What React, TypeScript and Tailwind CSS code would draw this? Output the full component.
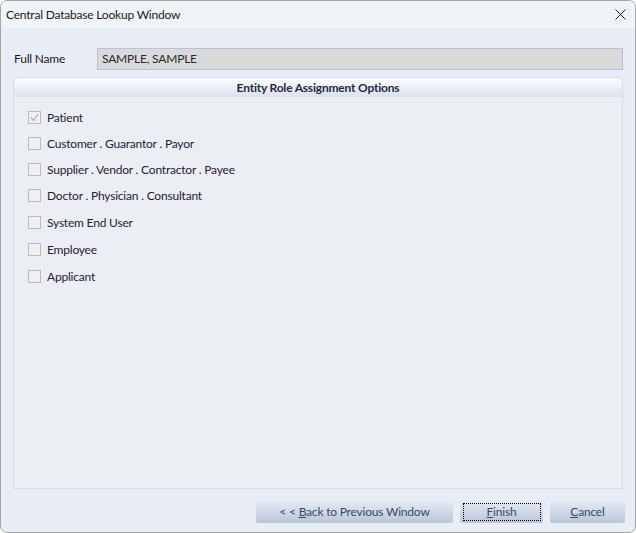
import React from "react";

const font = { fontFamily: 'Lato, "Noto Sans", sans-serif' };

function Check({ label, checked }: { label: string; checked?: boolean }) {
  return (
    <div className="flex items-center h-[13px] gap-[6px]">
      <div className="w-[13px] h-[13px] border border-[#bcbcbc] bg-[#f0f0f0] flex items-center justify-center">
        {checked && (
          <svg width="9" height="9" viewBox="0 0 9 9">
            <path d="M1 4.5 L3.5 7.5 L8 1" fill="none" stroke="#a7b1c2" strokeWidth="1.3" />
          </svg>
        )}
      </div>
      <span className="text-[12px] text-[#2a1a33] leading-none">{label}</span>
    </div>
  );
}

function Btn({ children, w, focus }: { children: React.ReactNode; w: string; focus?: boolean }) {
  return (
    <div
      className={`${w} h-[23px] rounded-[2px] bg-gradient-to-b from-[#e8edf5] to-[#b9c5d8] flex items-center justify-center text-[12px] text-[#3a4a66]`}
    >
      {focus ? (
        <div className="w-[78px] h-[18px] border border-dotted border-black flex items-center justify-center">
          {children}
        </div>
      ) : (
        children
      )}
    </div>
  );
}

export default function App() {
  const items = [
    "Customer . Guarantor . Payor",
    "Supplier . Vendor . Contractor . Payee",
    "Doctor . Physician . Consultant",
    "System End User",
    "Employee",
    "Applicant",
  ];
  return (
    <div style={font} className="w-[636px] h-[533px] bg-[#e9edf5] border border-[#a6a6a6] rounded-[7px] overflow-hidden flex flex-col tracking-[-0.2px]">
      <div className="h-[27px] bg-[#f0f4f9] flex items-center justify-between pl-[5px] pr-[9px]">
        <span className="text-[12px] text-[#1a1a1a]">Central Database Lookup Window</span>
        <svg width="11" height="11" viewBox="0 0 11 11">
          <path d="M0.5 0.5 L10.5 10.5 M10.5 0.5 L0.5 10.5" stroke="#222" strokeWidth="1" />
        </svg>
      </div>
      <div className="flex items-center mt-[20px] pl-[13px] pr-[12px] h-[22px]">
        <span className="w-[83px] text-[12px] text-[#1a1a1a]">Full Name</span>
        <div className="flex-1 h-[22px] bg-[#dadada] border border-[#b8c3d6] flex items-center pl-[4px] text-[12px] text-[#2a2a2a]">
          SAMPLE, SAMPLE
        </div>
      </div>
      <div className="mt-[7px] ml-[12px] mr-[12px] h-[412px] flex flex-col rounded-t-[4px] border border-[#d6dce6] bg-[#ebeef3]">
        <div className="h-[19px] rounded-t-[4px] bg-gradient-to-b from-[#fbfcfe] to-[#dce2eb] flex items-center justify-center text-[12px] font-bold text-[#1e2a44]">
          Entity Role Assignment Options
        </div>
        <div className="flex flex-col pl-[14px] pt-[14px]">
          <Check label="Patient" checked />
          <div className="flex flex-col gap-[13px] mt-[13px]">
            {items.slice(0, 3).map((t) => (
              <Check key={t} label={t} />
            ))}
          </div>
          <div className="flex flex-col gap-[14px] mt-[14px]">
            {items.slice(3).map((t) => (
              <Check key={t} label={t} />
            ))}
          </div>
        </div>
      </div>
      <div className="flex justify-end gap-[7px] mt-[11px] pr-[10px]">
        <Btn w="w-[197px]">
          <span>
            &lt; &lt; <span className="underline">B</span>ack to Previous Window
          </span>
        </Btn>
        <Btn w="w-[83px]" focus>
          <span>
            <span className="underline">F</span>inish
          </span>
        </Btn>
        <Btn w="w-[75px]">
          <span>
            <span className="underline">C</span>ancel
          </span>
        </Btn>
      </div>
    </div>
  );
}
